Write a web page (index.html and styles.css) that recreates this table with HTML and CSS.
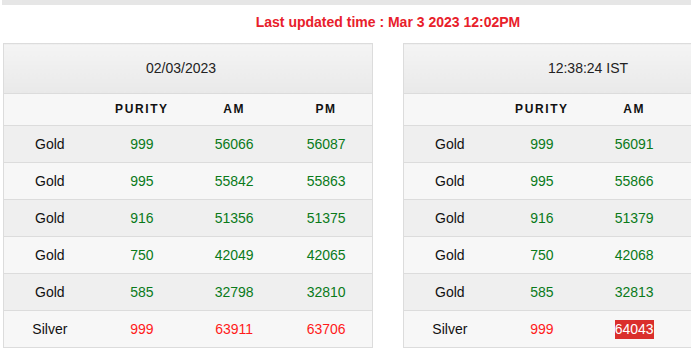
FILE: index.html
```html
<!DOCTYPE html>
<html>
<head>
<meta charset="utf-8">
<link rel="stylesheet" href="styles.css">
</head>
<body>
<div class="topbar"></div>
<div class="wrap">
  <div class="updated">Last updated time : Mar 3 2023 12:02PM</div>
  <div class="tables">
    <table class="rates">
      <thead>
        <tr class="head"><th colspan="4" class="date">02/03/2023</th></tr>
        <tr class="sub"><th></th><th>PURITY</th><th>AM</th><th>PM</th></tr>
      </thead>
      <tbody>
        <tr><td>Gold</td><td class="g">999</td><td class="g">56066</td><td class="g">56087</td></tr>
        <tr><td>Gold</td><td class="g">995</td><td class="g">55842</td><td class="g">55863</td></tr>
        <tr><td>Gold</td><td class="g">916</td><td class="g">51356</td><td class="g">51375</td></tr>
        <tr><td>Gold</td><td class="g">750</td><td class="g">42049</td><td class="g">42065</td></tr>
        <tr><td>Gold</td><td class="g">585</td><td class="g">32798</td><td class="g">32810</td></tr>
        <tr><td>Silver</td><td class="r">999</td><td class="r">63911</td><td class="r">63706</td></tr>
      </tbody>
    </table>
    <table class="rates">
      <thead>
        <tr class="head"><th colspan="4">12:38:24 IST</th></tr>
        <tr class="sub"><th></th><th>PURITY</th><th>AM</th><th>PM</th></tr>
      </thead>
      <tbody>
        <tr><td>Gold</td><td class="g">999</td><td class="g">56091</td><td class="g">56112</td></tr>
        <tr><td>Gold</td><td class="g">995</td><td class="g">55866</td><td class="g">55887</td></tr>
        <tr><td>Gold</td><td class="g">916</td><td class="g">51379</td><td class="g">51398</td></tr>
        <tr><td>Gold</td><td class="g">750</td><td class="g">42068</td><td class="g">42084</td></tr>
        <tr><td>Gold</td><td class="g">585</td><td class="g">32813</td><td class="g">32825</td></tr>
        <tr><td>Silver</td><td class="r">999</td><td class="r"><span class="flash">64043</span></td><td class="r">63838</td></tr>
      </tbody>
    </table>
  </div>
</div>
</body>
</html>
```
FILE: styles.css
```css
html, body {
  margin: 0;
  padding: 0;
  background: #fff;
  font-family: "Liberation Sans", Arial, sans-serif;
  color: #111;
}
.topbar {
  height: 5px;
  background: #e6e6e6;
  width: 776px;
  margin-left: 2px;
}
.wrap {
  width: 776px;
  padding: 0 3px;
  box-sizing: border-box;
}
.updated {
  text-align: center;
  color: #e8202a;
  font-weight: bold;
  font-size: 14px;
  height: 17px;
  line-height: 17px;
  margin-top: 9px;
  margin-bottom: 12px;
}
.tables {
  display: flex;
  gap: 30px;
}
.rates {
  width: 370px;
  border-collapse: collapse;
  border: 1px solid #dcdcdc;
  table-layout: fixed;
  font-size: 14px;
}
.rates th, .rates td {
  text-align: center;
  padding: 0;
}
.head th {
  height: 47px;
  font-weight: normal;
  font-size: 14px;
  color: #222;
  background: linear-gradient(#f4f4f4, #e9e9e9);
  border-bottom: 1px solid #dcdcdc;
  padding-bottom: 2px;
}
.head th.date {
  padding-right: 14px;
}
.sub th {
  height: 30px;
  font-size: 12px;
  font-weight: bold;
  letter-spacing: 1.6px;
  color: #111;
  background: #f7f7f7;
  border-bottom: 1px solid #dcdcdc;
  padding-bottom: 1px;
}
.rates tbody td {
  height: 36px;
  border-bottom: 1px solid #dcdcdc;
  background: #f7f7f7;
}
.rates tbody tr:nth-child(odd) td {
  background: #efefef;
}
.g { color: #0a7a1a; }
.r { color: #ff1a1a; }
.flash {
  background: #da2f2c;
  color: #fff;
  padding: 1px 0 2px;
}
```
